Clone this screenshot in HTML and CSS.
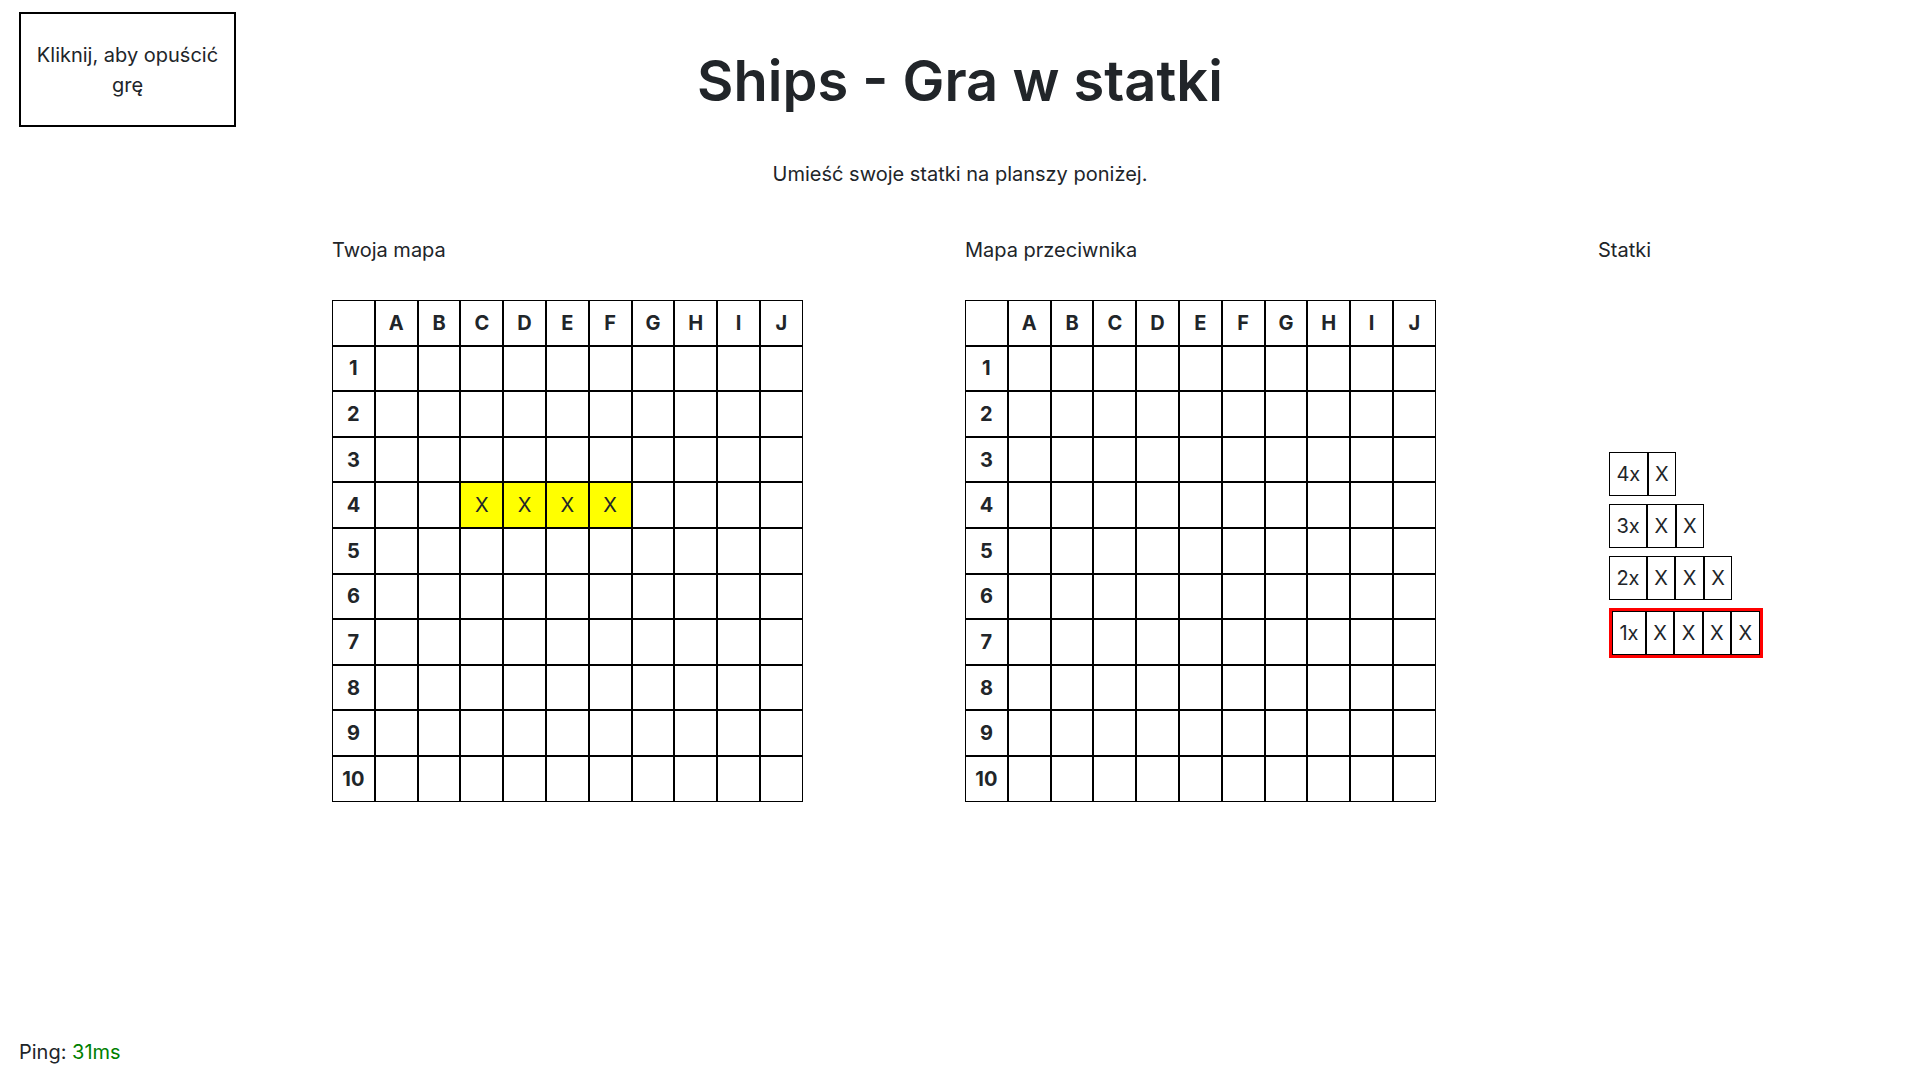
FILE: index.html
```html
<!DOCTYPE html>
<html lang="pl">
<head>
<meta charset="utf-8">
<title>Ships - Gra w statki</title>
<link rel="stylesheet" href="styles.css">
</head>
<body>
<div class="page">
  <header class="header">
    <div class="header-left">
      <button class="leave">Kliknij, aby opuścić grę</button>
    </div>
    <h1 class="title">Ships - Gra w statki</h1>
    <div class="header-right"></div>
  </header>
  <p class="subtitle">Umieść swoje statki na planszy poniżej.</p>

  <main class="boards">
    <section class="board">
      <div class="label">Twoja mapa</div>
      <table class="grid">
        <tr><th></th><th>A</th><th>B</th><th>C</th><th>D</th><th>E</th><th>F</th><th>G</th><th>H</th><th>I</th><th>J</th></tr>
        <tr><th>1</th><td></td><td></td><td></td><td></td><td></td><td></td><td></td><td></td><td></td><td></td></tr>
        <tr><th>2</th><td></td><td></td><td></td><td></td><td></td><td></td><td></td><td></td><td></td><td></td></tr>
        <tr><th>3</th><td></td><td></td><td></td><td></td><td></td><td></td><td></td><td></td><td></td><td></td></tr>
        <tr><th>4</th><td></td><td></td><td class="ship">X</td><td class="ship">X</td><td class="ship">X</td><td class="ship">X</td><td></td><td></td><td></td><td></td></tr>
        <tr><th>5</th><td></td><td></td><td></td><td></td><td></td><td></td><td></td><td></td><td></td><td></td></tr>
        <tr><th>6</th><td></td><td></td><td></td><td></td><td></td><td></td><td></td><td></td><td></td><td></td></tr>
        <tr><th>7</th><td></td><td></td><td></td><td></td><td></td><td></td><td></td><td></td><td></td><td></td></tr>
        <tr><th>8</th><td></td><td></td><td></td><td></td><td></td><td></td><td></td><td></td><td></td><td></td></tr>
        <tr><th>9</th><td></td><td></td><td></td><td></td><td></td><td></td><td></td><td></td><td></td><td></td></tr>
        <tr><th>10</th><td></td><td></td><td></td><td></td><td></td><td></td><td></td><td></td><td></td><td></td></tr>
      </table>
    </section>

    <section class="board">
      <div class="label">Mapa przeciwnika</div>
      <table class="grid">
        <tr><th></th><th>A</th><th>B</th><th>C</th><th>D</th><th>E</th><th>F</th><th>G</th><th>H</th><th>I</th><th>J</th></tr>
        <tr><th>1</th><td></td><td></td><td></td><td></td><td></td><td></td><td></td><td></td><td></td><td></td></tr>
        <tr><th>2</th><td></td><td></td><td></td><td></td><td></td><td></td><td></td><td></td><td></td><td></td></tr>
        <tr><th>3</th><td></td><td></td><td></td><td></td><td></td><td></td><td></td><td></td><td></td><td></td></tr>
        <tr><th>4</th><td></td><td></td><td></td><td></td><td></td><td></td><td></td><td></td><td></td><td></td></tr>
        <tr><th>5</th><td></td><td></td><td></td><td></td><td></td><td></td><td></td><td></td><td></td><td></td></tr>
        <tr><th>6</th><td></td><td></td><td></td><td></td><td></td><td></td><td></td><td></td><td></td><td></td></tr>
        <tr><th>7</th><td></td><td></td><td></td><td></td><td></td><td></td><td></td><td></td><td></td><td></td></tr>
        <tr><th>8</th><td></td><td></td><td></td><td></td><td></td><td></td><td></td><td></td><td></td><td></td></tr>
        <tr><th>9</th><td></td><td></td><td></td><td></td><td></td><td></td><td></td><td></td><td></td><td></td></tr>
        <tr><th>10</th><td></td><td></td><td></td><td></td><td></td><td></td><td></td><td></td><td></td><td></td></tr>
      </table>
    </section>

    <section class="fleet">
      <div class="label">Statki</div>
      <div class="fleet-area">
        <div class="ships">
          <div class="ship-row"><span class="ship-cell count">4x</span><span class="ship-cell">X</span></div>
          <div class="ship-row"><span class="ship-cell count">3x</span><span class="ship-cell">X</span><span class="ship-cell">X</span></div>
          <div class="ship-row"><span class="ship-cell count">2x</span><span class="ship-cell">X</span><span class="ship-cell">X</span><span class="ship-cell">X</span></div>
          <div class="ship-row selected"><span class="ship-cell count">1x</span><span class="ship-cell">X</span><span class="ship-cell">X</span><span class="ship-cell">X</span><span class="ship-cell">X</span></div>
        </div>
      </div>
    </section>
  </main>

  <footer class="ping">Ping: <span class="ping-value">31ms</span></footer>
</div>
</body>
</html>
```

FILE: styles.css
```css
html, body {
  margin: 0;
  padding: 0;
  background: #ffffff;
}

body {
  font-family: Inter, "Noto Sans", sans-serif;
  font-size: 20px;
  line-height: 1.5;
  color: #212529;
}

.page {
  min-height: 100vh;
  box-sizing: border-box;
  display: flex;
  flex-direction: column;
  padding: 12px 19px 13px 19px;
}

.header {
  display: grid;
  grid-template-columns: 1fr auto 1fr;
  align-items: start;
}

.leave {
  width: 217px;
  height: 115px;
  box-sizing: border-box;
  background: #ffffff;
  border: 2px solid #000000;
  font-family: inherit;
  font-size: 20px;
  line-height: 30px;
  color: #212529;
  padding: 0 8px;
  text-align: center;
  cursor: pointer;
}

.title {
  margin: 36px 0 0 0;
  font-size: 56px;
  font-weight: 600;
  line-height: 1.2;
  color: #212529;
  text-align: center;
}

.subtitle {
  margin: 32px 0 0 0;
  text-align: center;
}

.boards {
  display: grid;
  grid-template-columns: 471px 471px auto;
  column-gap: 162px;
  margin: 46px 0 0 313px;
}

.label {
  height: 30px;
  margin-bottom: 35px;
}

.grid {
  border-collapse: separate;
  border-spacing: 0;
}

.grid th,
.grid td {
  box-sizing: border-box;
  width: 42.8px;
  height: 45.6px;
  padding: 0;
  border: 1px solid #000000;
  text-align: center;
  vertical-align: middle;
  font-size: 20px;
}

.grid th {
  font-weight: 700;
}

.grid td {
  font-weight: 400;
}

.grid td.ship {
  background: #ffff00;
}

.fleet-area {
  height: 502px;
  display: flex;
  align-items: center;
  padding: 7px 0 0 11px;
  box-sizing: border-box;
}

.ships {
  display: flex;
  flex-direction: column;
  align-items: flex-start;
  gap: 8px;
}

.ship-row {
  display: flex;
}

.ship-row.selected {
  border: 3px solid #ff0000;
}

.ship-cell {
  display: block;
  border: 1px solid #000000;
  padding: 6px 6.4px;
  line-height: 30px;
}

.ping {
  margin-top: auto;
  line-height: 30px;
}

.ping-value {
  color: #008000;
}
```
